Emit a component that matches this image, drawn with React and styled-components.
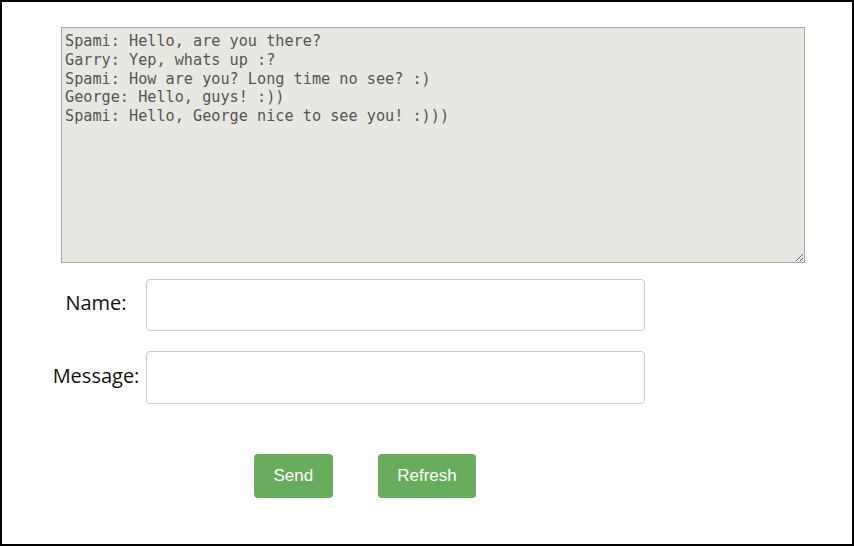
import React from "react";
import styled, { createGlobalStyle } from "styled-components";

const Global = createGlobalStyle`
  html, body { margin: 0; padding: 0; background: #fff; }
  * { box-sizing: border-box; }
`;

const Frame = styled.div`
  width: 854px;
  height: 546px;
  border: 2px solid #000;
  background: #fff;
  padding: 25px 0 0 59px;
  font-family: "Open Sans", "Liberation Sans", sans-serif;
`;

const ChatLog = styled.textarea`
  display: block;
  width: 744px;
  height: 236px;
  margin: 0;
  padding: 4px 3px 3px;
  border: 1px solid #a9a9a9;
  background: #e8e8e3;
  color: #555;
  font-family: "DejaVu Sans Mono", "Liberation Mono", monospace;
  font-size: 15.2px;
  line-height: 18.75px;
  outline: none;
`;

const Fields = styled.div`
  display: grid;
  grid-template-columns: 96px 500px;
  column-gap: 2px;
  row-gap: 20px;
  margin: 16px 0 0 -13px;
  align-items: center;
`;

const Label = styled.label`
  text-align: center;
  font-size: 20px;
  color: #111;
  padding-bottom: 5px;
`;

const Input = styled.input`
  display: block;
  width: 499px;
  height: ${(p) => p.$h}px;
  border: 1px solid #ccc;
  border-radius: 4px;
  padding: 6px 12px;
  font-size: 16px;
  outline: none;
  background: #fff;
`;

const Actions = styled.div`
  display: flex;
  gap: 45px;
  margin: 50px 0 0 193px;
`;

const Button = styled.button`
  height: 44px;
  padding: 0 19.5px;
  border: none;
  border-radius: 4px;
  background: #68ad5c;
  color: #fff;
  font-family: "Liberation Sans", Arial, sans-serif;
  font-size: 17px;
  cursor: pointer;
`;

const log = `Spami: Hello, are you there?
Garry: Yep, whats up :?
Spami: How are you? Long time no see? :)
George: Hello, guys! :))
Spami: Hello, George nice to see you! :)))`;

export default function App() {
  return (
    <>
      <Global />
      <Frame>
        <ChatLog readOnly defaultValue={log} />
        <Fields>
          <Label htmlFor="name">Name:</Label>
          <Input id="name" $h={52} />
          <Label htmlFor="msg">Message:</Label>
          <Input id="msg" $h={53} />
        </Fields>
        <Actions>
          <Button>Send</Button>
          <Button>Refresh</Button>
        </Actions>
      </Frame>
    </>
  );
}
